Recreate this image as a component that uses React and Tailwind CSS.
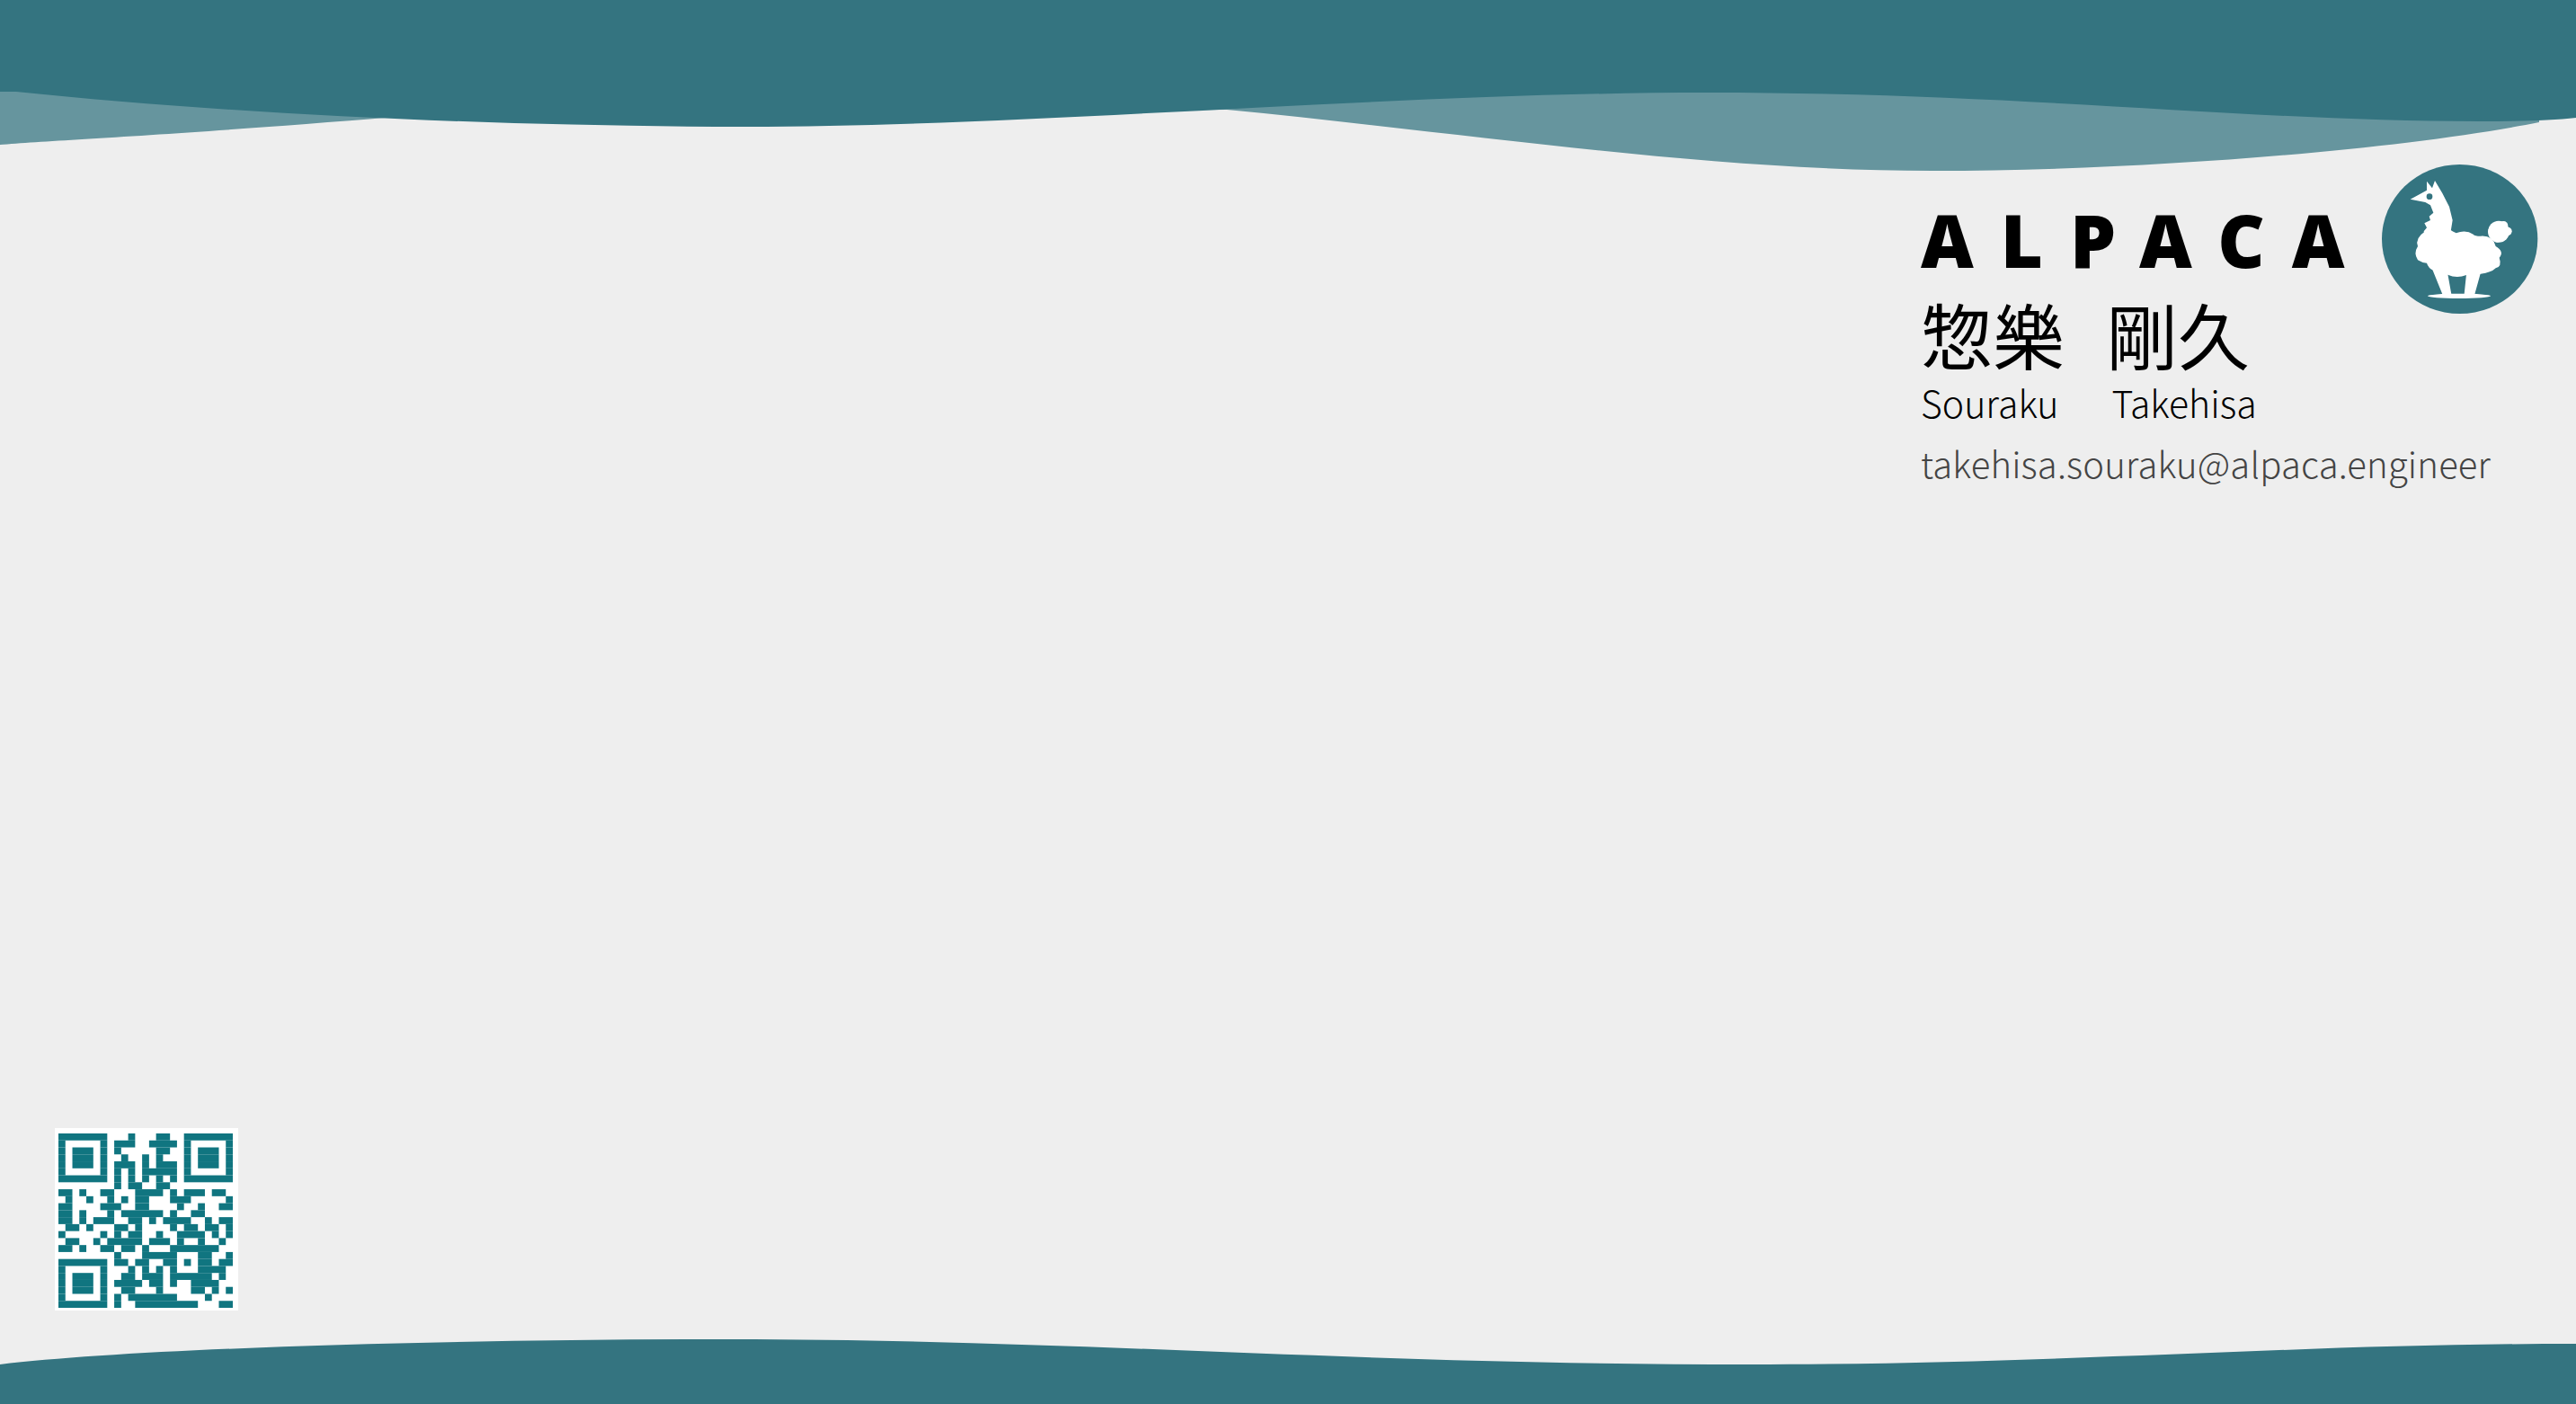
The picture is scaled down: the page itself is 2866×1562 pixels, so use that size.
// dark modules per row of the 25x25 code, as [from, to] column runs
const QR_RUNS = [
  [[0, 6], [10, 10], [14, 15], [18, 24]],
  [[0, 0], [6, 6], [8, 10], [13, 16], [18, 18], [24, 24]],
  [[0, 0], [2, 4], [6, 6], [8, 8], [14, 15], [18, 18], [20, 22], [24, 24]],
  [[0, 0], [2, 4], [6, 6], [9, 9], [12, 12], [14, 14], [18, 18], [20, 22], [24, 24]],
  [[0, 0], [2, 4], [6, 6], [8, 10], [12, 12], [14, 16], [18, 18], [20, 22], [24, 24]],
  [[0, 0], [6, 6], [8, 8], [10, 10], [12, 16], [18, 18], [24, 24]],
  [[0, 6], [8, 8], [10, 10], [12, 12], [14, 14], [16, 16], [18, 24]],
  [[8, 8], [10, 11], [14, 15]],
  [[0, 1], [3, 3], [6, 7], [11, 14], [16, 16], [18, 20], [22, 23]],
  [[1, 1], [4, 4], [7, 7], [9, 9], [11, 12], [16, 18], [24, 24]],
  [[0, 1], [6, 8], [11, 12], [17, 17], [20, 20], [23, 24]],
  [[0, 1], [3, 3], [7, 7], [9, 14], [16, 16], [19, 20]],
  [[0, 1], [3, 3], [5, 7], [10, 11], [13, 13], [15, 18], [21, 21], [23, 24]],
  [[1, 2], [4, 4], [8, 9], [11, 11], [16, 16], [18, 19], [21, 22], [24, 24]],
  [[0, 0], [6, 6], [8, 8], [10, 11], [14, 14], [17, 20], [22, 22], [24, 24]],
  [[1, 2], [5, 5], [7, 11], [13, 15], [17, 17], [20, 20], [23, 23]],
  [[0, 1], [3, 3], [6, 7], [9, 10], [12, 12], [16, 22]],
  [[8, 8], [12, 16], [20, 21], [24, 24]],
  [[0, 6], [8, 9], [11, 12], [15, 16], [18, 18], [20, 21], [23, 24]],
  [[0, 0], [6, 6], [10, 10], [12, 12], [14, 14], [16, 16], [20, 23]],
  [[0, 0], [2, 4], [6, 6], [9, 10], [12, 14], [16, 21], [23, 23]],
  [[0, 0], [2, 4], [6, 6], [8, 11], [13, 14], [16, 16], [19, 22]],
  [[0, 0], [2, 4], [6, 6], [9, 10], [14, 14], [19, 20], [22, 22], [24, 24]],
  [[0, 0], [6, 6], [8, 8], [10, 16], [21, 21]],
  [[0, 6], [8, 8], [11, 19], [23, 24]],
];

function Waves() {
  return (
    <svg className="absolute inset-0" width="2866" height="1562" viewBox="0 0 2866 1562">
      <path
        fill="#66959e"
        d="M0 0V161C60 156 200 150 440 130L1365 122C1650 150 1900 190 2150 190C2400 190 2680 165 2825 136V0Z"
      />
      <path
        fill="#347480"
        d="M0 0V102L18 102C250 126 550 141 830 141C1150 141 1550 103 1900 103C2250 103 2500 135 2760 135C2800 135 2840 134 2866 131V0Z"
      />
      <path
        fill="#347480"
        d="M0 1518C150 1500 500 1490 813 1490C1200 1490 1500 1518 1947 1518C2300 1518 2550 1495 2866 1495V1562H0Z"
      />
    </svg>
  );
}

function AlpacaLogo() {
  return (
    <svg width="200" height="190" viewBox="0 0 600 570" className="-mt-[13px] -mr-[7px] shrink-0">
      <ellipse cx="320" cy="288" rx="260" ry="249" fill="#347480" />
      <g fill="#fff">
        <path d="M155 155L210 125L210 95L228 118L237 93L262 135L285 180L296 225L290 262L300 300L205 290L200 262L210 250L202 235L222 225L218 212L232 200L222 175L205 165Z" />
        <path d="M205 262Q170 285 180 312Q165 335 180 358Q195 368 210 368Q215 385 232 392L280 407Q310 420 342 408L390 404Q425 400 440 385Q462 380 452 350Q470 330 440 312Q430 275 390 278Q370 278 365 272Q340 255 308 268Q295 262 290 258Z" />
        <circle cx="450" cy="263" r="36" />
        <circle cx="466" cy="243" r="15" />
        <circle cx="480" cy="262" r="14" />
        <circle cx="445" cy="283" r="16" />
        <path d="M228 388L262 472H292L280 405ZM342 405L335 472H370L390 400Z" />
        <ellipse cx="318" cy="478" rx="105" ry="8" />
      </g>
      <ellipse cx="219" cy="146" rx="10" ry="10" fill="#347480" />
    </svg>
  );
}

function QrCode() {
  return (
    <div className="bg-white pl-[4px] pr-[6px] pt-[6px] pb-[3px] w-[204px]">
      <svg width="194" height="194" viewBox="0 0 25 25" className="block">
        {QR_RUNS.map((runs, row) =>
          runs.map(([from, to]) => (
            <rect key={`${row}-${from}`} x={from} y={row} width={to - from + 1} height="1" fill="#107580" />
          ))
        )}
      </svg>
    </div>
  );
}

export default function App() {
  return (
    <div className="relative w-[2866px] h-[1562px] bg-[#eeeeee] overflow-hidden font-['Noto_Sans_CJK_JP',sans-serif]">
      <Waves />
      <div className="relative flex flex-col justify-between h-full pt-[183px] pb-[104px] pl-[61px] pr-[43px]">
        <div className="self-end w-[686px]">
          <div className="flex justify-between items-start">
            <div className="pt-[39px]">
              <div className="-mr-[30px] font-['Noto_Sans',sans-serif] font-black text-[81px] leading-[90px] tracking-[30px] text-black">
                ALPACA
              </div>
              <div className="flex gap-[46px] mt-[13px] text-[80px] leading-[90px] text-black">
                <span>惣樂</span>
                <span>剛久</span>
              </div>
              <div className="flex gap-[59px] mt-[7px] text-[41px] leading-[50px] font-light text-black">
                <span>Souraku</span>
                <span>Takehisa</span>
              </div>
            </div>
            <AlpacaLogo />
          </div>
          <div className="mt-[18px] text-[40px] leading-[50px] font-extralight tracking-[0.17px] text-[#444444]">
            takehisa.souraku@alpaca.engineer
          </div>
        </div>
        <QrCode />
      </div>
    </div>
  );
}
